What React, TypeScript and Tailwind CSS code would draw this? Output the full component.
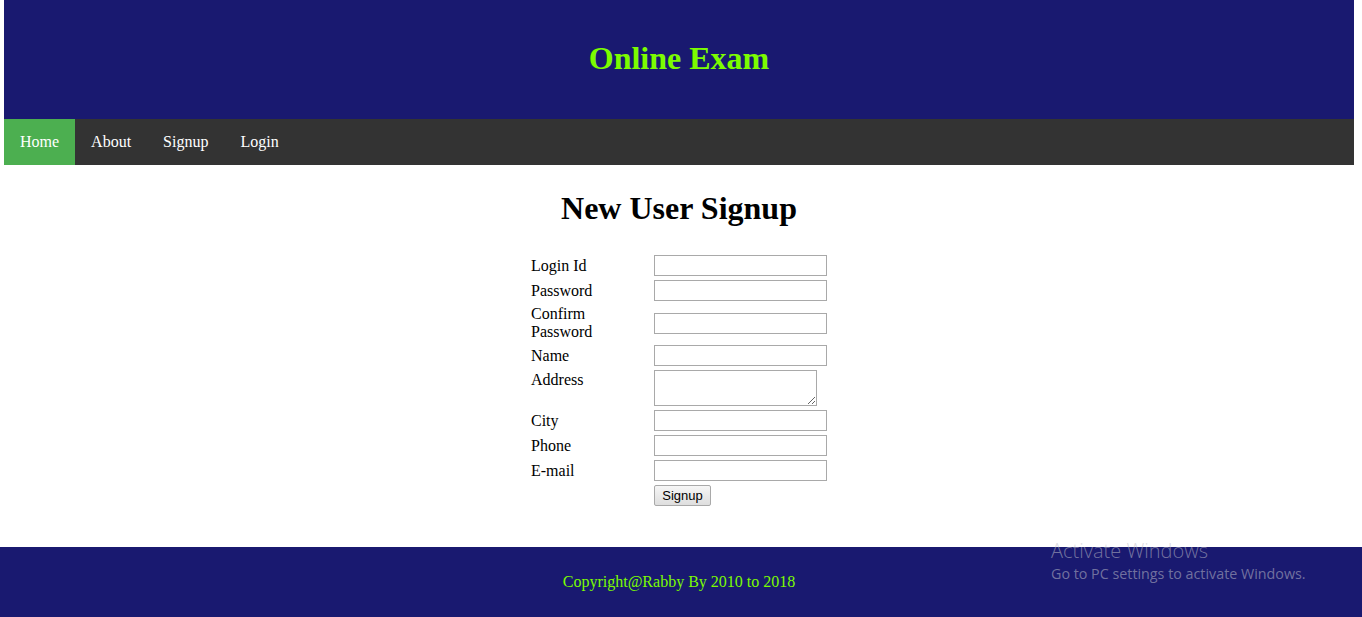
import React from 'react';

const rows = [
  { label: 'Login Id', type: 'text' },
  { label: 'Password', type: 'password' },
];

function Field({ type = 'text' }: { type?: string }) {
  return (
    <input
      type={type}
      className="w-[173px] h-[21px] border border-[#a9a9a9] bg-white px-[2px] text-[13px] outline-none"
    />
  );
}

export default function App() {
  const nav = ['Home', 'About', 'Signup', 'Login'];

  return (
    <div className="relative min-h-[617px] bg-white font-['Liberation_Serif',serif] text-black">
      <div className="ml-[4px] mr-[8px]">
        <header className="h-[119px] bg-[#191970] flex items-center justify-center">
          <h1 className="text-[32px] font-bold text-[#7CFC00] leading-[37px] mb-[2px]">Online Exam</h1>
        </header>
        <nav className="h-[46px] bg-[#333333] flex">
          {nav.map((item, i) => (
            <a
              key={item}
              href="#"
              className={`px-[16px] flex items-center text-[16px] text-white ${i === 0 ? 'bg-[#4CAF50]' : ''}`}
            >
              {item}
            </a>
          ))}
        </nav>
        <main className="h-[382px] flex flex-col items-center">
          <h2 className="mt-[25px] text-[32px] font-bold leading-[37px]">New User Signup</h2>
          <div className="mt-[28px] grid grid-cols-[119px_173px] gap-x-[4px] gap-y-[4px] items-center text-[16px] leading-[18px]">
            {rows.map((r) => (
              <React.Fragment key={r.label}>
                <span>{r.label}</span>
                <Field type={r.type} />
              </React.Fragment>
            ))}
            <span className="leading-[18px]">
              Confirm
              <br />
              Password
            </span>
            <Field type="password" />
            <span>Name</span>
            <Field />
            <span className="self-start pt-[1px]">Address</span>
            <textarea className="w-[163px] h-[36px] border border-[#a9a9a9] bg-white text-[13px] outline-none resize" />
            <span>City</span>
            <Field />
            <span>Phone</span>
            <Field />
            <span>E-mail</span>
            <Field type="email" />
            <span />
            <div>
              <button className="h-[21px] w-[57px] border border-[#a9a9a9] rounded-[2px] bg-gradient-to-b from-[#f6f6f6] to-[#dedede] font-['Liberation_Sans',sans-serif] text-[13px] text-black leading-[18px]">
                Signup
              </button>
            </div>
          </div>
        </main>
      </div>
      <footer className="h-[70px] bg-[#191970] flex items-center justify-center pr-[4px]">
        <p className="text-[16px] text-[#7CFC00]">Copyright@Rabby By 2010 to 2018</p>
      </footer>
      <div className="absolute left-[1051px] top-[539px] font-['Open_Sans',sans-serif] text-[rgba(190,190,200,0.55)] pointer-events-none">
        <div className="text-[20px] leading-[24px] font-light">Activate Windows</div>
        <div className="text-[14.3px] leading-[21px]">Go to PC settings to activate Windows.</div>
      </div>
    </div>
  );
}
